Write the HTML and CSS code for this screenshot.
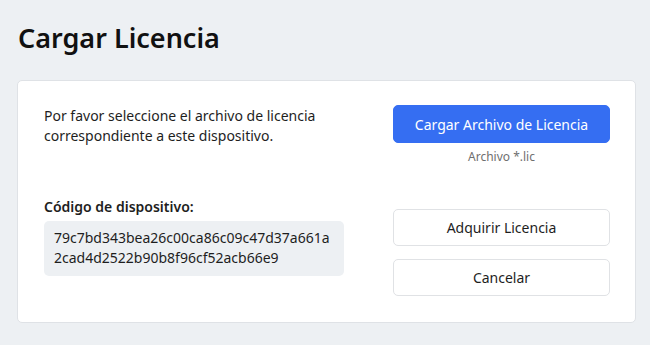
FILE: index.html
```html
<!DOCTYPE html>
<html lang="es">
<head>
<meta charset="utf-8">
<title>Cargar Licencia</title>
<link rel="stylesheet" href="styles.css">
</head>
<body>
<main class="page">
  <h1 class="title">Cargar Licencia</h1>
  <section class="card">
    <div class="col-left">
      <p class="intro">Por favor seleccione el archivo de licencia correspondiente a este dispositivo.</p>
      <div class="device">
        <div class="device-label">Código de dispositivo:</div>
        <div class="device-code">79c7bd343bea26c00ca86c09c47d37a661a 2cad4d2522b90b8f96cf52acb66e9</div>
      </div>
    </div>
    <div class="col-right">
      <button class="btn btn-primary">Cargar Archivo de Licencia</button>
      <div class="hint">Archivo *.lic</div>
      <div class="actions">
        <button class="btn btn-secondary">Adquirir Licencia</button>
        <button class="btn btn-secondary">Cancelar</button>
      </div>
    </div>
  </section>
</main>
</body>
</html>
```

FILE: styles.css
```css
html, body {
  margin: 0;
  padding: 0;
  background: #edf0f3;
}
body {
  font-family: "Noto Sans", "Open Sans", sans-serif;
  color: #222;
  width: 650px;
  height: 345px;
  overflow: hidden;
}
.page {
  padding: 18px 14px 0 17px;
}
.title {
  margin: 0 0 0 1px;
  font-size: 27px;
  line-height: 40px;
  font-weight: 600;
  color: #111;
}
.card {
  margin-top: 22px;
  background: #fff;
  border: 1px solid #dfe2e6;
  border-radius: 5px;
  padding: 24px 25px 26px 26px;
  display: flex;
  justify-content: space-between;
}
.col-left {
  width: 300px;
  display: flex;
  flex-direction: column;
}
.intro {
  margin: 1px 0 0;
  font-size: 14px;
  line-height: 20px;
  color: #1e1e1e;
}
.device {
  margin-top: 51px;
  display: flex;
  flex-direction: column;
  gap: 4px;
}
.device-label {
  font-size: 14px;
  line-height: 20px;
  font-weight: 600;
  color: #1e1e1e;
}
.device-code {
  background: #edf0f3;
  border-radius: 5px;
  padding: 7px 10px 8px 10px;
  font-size: 14px;
  line-height: 20px;
  color: #1e1e1e;
  word-break: break-all;
}
.col-right {
  width: 217px;
  display: flex;
  flex-direction: column;
}
.btn {
  font-family: inherit;
  font-size: 14px;
  border-radius: 5px;
  cursor: pointer;
  width: 100%;
}
.btn-primary {
  height: 38px;
  background: #356ef2;
  border: 1px solid #356ef2;
  color: #fff;
}
.hint {
  margin-top: 4px;
  text-align: center;
  font-size: 12px;
  line-height: 20px;
  color: #6f6f6f;
}
.actions {
  margin-top: 42px;
  display: flex;
  flex-direction: column;
  gap: 13px;
}
.btn-secondary {
  height: 37px;
  background: #fff;
  border: 1px solid #e0e2e5;
  color: #1e1e1e;
}
```
